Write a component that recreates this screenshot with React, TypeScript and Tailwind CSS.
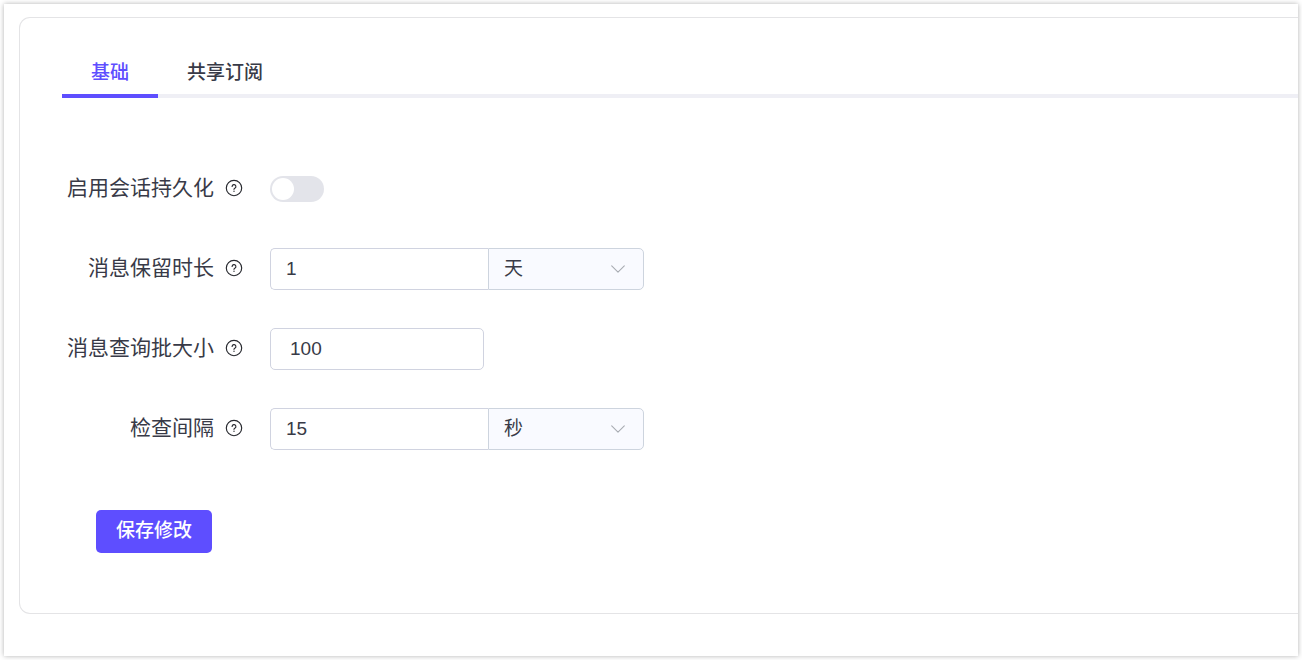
import { useState, type ReactNode } from 'react';

function HelpIcon() {
  return (
    <svg viewBox="0 0 18 18" className="size-[18px] shrink-0 text-[#26282e]" fill="none" stroke="currentColor" aria-hidden="true">
      <circle cx="9" cy="9" r="7.7" strokeWidth="1.15" />
      <path d="M7.1 7.5a1.9 1.9 0 1 1 2.75 1.7c-.55.3-.85.55-.85 1.1" strokeWidth="1.15" strokeLinecap="round" />
      <circle cx="9" cy="12.2" r=".7" fill="currentColor" stroke="none" />
    </svg>
  );
}

function Row({ id, label, children }: { id: string; label: string; children: ReactNode }) {
  return (
    <div className="flex h-[42px] items-center">
      <label htmlFor={id} className="mr-[27px] flex w-[181px] items-center justify-end gap-[11px] pb-[2px] text-[21px] leading-[32px] whitespace-nowrap">
        {label}
        <HelpIcon />
      </label>
      {children}
    </div>
  );
}

function Duration({ id, value, unit, units }: { id: string; value: string; unit: string; units: string[] }) {
  return (
    <div className="flex h-[42px] w-[374px]">
      <input id={id} type="text" defaultValue={value} className="min-w-0 flex-1 rounded-l-[5px] border border-r-0 border-[#d0d3e0] bg-white px-[15px] text-[19px] outline-none" />
      <div className="relative w-[156px]">
        <select aria-label="单位" defaultValue={unit} className="size-full appearance-none rounded-r-[5px] border border-[#cdd4de] bg-[#f9faff] px-[15px] text-[19px] outline-none">
          {units.map((u) => (
            <option key={u}>{u}</option>
          ))}
        </select>
        <svg viewBox="0 0 14 8" className="pointer-events-none absolute top-[17px] right-[19px] h-2 w-[14px]" fill="none" stroke="#a8abb2" strokeWidth="1.1" strokeLinecap="round" strokeLinejoin="round" aria-hidden="true">
          <path d="M.7.8 7 7.1 13.3.8" />
        </svg>
      </div>
    </div>
  );
}

const tabs = ['基础', '共享订阅'];

export default function App() {
  const [active, setActive] = useState(0);
  const [enabled, setEnabled] = useState(false);

  return (
    <main className="min-h-screen bg-white p-1 font-['Liberation_Sans','Noto_Sans_CJK_SC',sans-serif] text-[#383a47]">
      <div className="bg-white pt-[13px] pb-[42px] pl-[15px] shadow-[0_0_5px_rgba(0,0,0,0.3)]">
        <section className="rounded-l-[11px] border border-r-0 border-[#e4e4e6] pt-[26px] pb-[60px] pl-[42px]">
          <div role="tablist" className="flex h-[54px] border-b-4 border-[#efeff5]">
            {tabs.map((tab, i) => (
              <button
                key={tab}
                type="button"
                role="tab"
                aria-selected={active === i}
                onClick={() => setActive(i)}
                className={
                  active === i
                    ? 'h-[54px] border-b-4 border-[#5e4eff] px-[29px] pt-[9px] text-[19px] font-medium text-[#5e4eff]'
                    : 'h-[54px] border-b-4 border-transparent px-[29px] pt-[9px] text-[19px] font-medium'
                }
              >
                {tab}
              </button>
            ))}
          </div>
          <form className="pt-[70px]" onSubmit={(e) => e.preventDefault()}>
            <div className="flex flex-col gap-[38px]">
              <Row id="persistence" label="启用会话持久化">
                <span className="relative h-[26px] w-[54px]">
                  <input
                    id="persistence"
                    type="checkbox"
                    role="switch"
                    checked={enabled}
                    onChange={(e) => setEnabled(e.target.checked)}
                    className="peer block size-full appearance-none rounded-full bg-[#e3e4ea] checked:bg-[#5e4eff]"
                  />
                  <span className="pointer-events-none absolute top-[2px] left-[2px] size-[22px] rounded-full bg-white peer-checked:left-[30px]" />
                </span>
              </Row>
              <Row id="retention" label="消息保留时长">
                <Duration id="retention" value="1" unit="天" units={['天', '小时', '分钟', '秒']} />
              </Row>
              <Row id="batch" label="消息查询批大小">
                <input id="batch" type="text" defaultValue="100" className="h-[42px] w-[214px] rounded-[5px] border border-[#d0d3e0] bg-white px-[19px] text-[19px] outline-none" />
              </Row>
              <Row id="interval" label="检查间隔">
                <Duration id="interval" value="15" unit="秒" units={['天', '小时', '分钟', '秒']} />
              </Row>
            </div>
            <button type="submit" className="mt-[60px] ml-[34px] block h-[43px] rounded-[5px] bg-[#5e4eff] px-5 pb-[1px] text-[19px] font-medium text-white">
              保存修改
            </button>
          </form>
        </section>
      </div>
    </main>
  );
}
